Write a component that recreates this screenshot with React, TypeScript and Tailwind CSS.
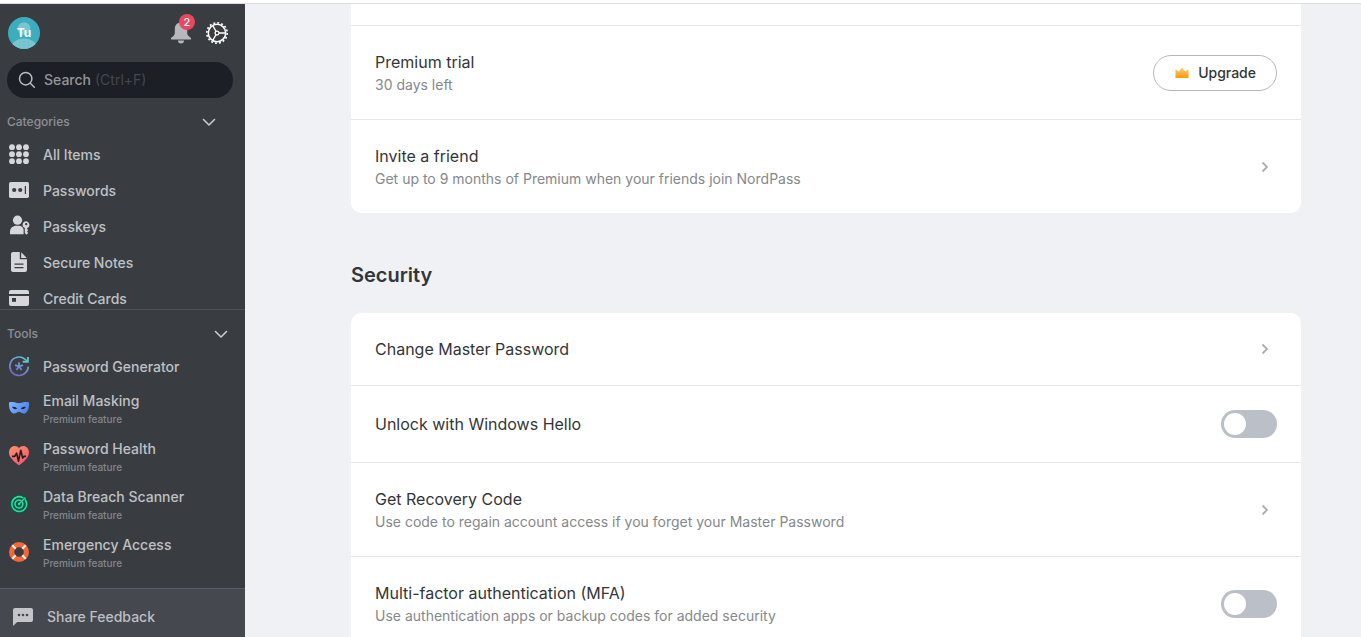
import { useState, type ReactNode } from "react";
import clsx from "clsx";

function ChevronDown() {
  return (
    <svg viewBox="0 0 24 24" className="size-6" fill="none" stroke="#c9cbce" strokeWidth="1.6" strokeLinecap="round" strokeLinejoin="round">
      <path d="M6.500 9.500 12 15l5.500-5.500" />
    </svg>
  );
}

function ChevronRight() {
  return (
    <svg viewBox="0 0 24 24" className="size-6 shrink-0" fill="none" stroke="#acaeb1" strokeWidth="1.8">
      <path d="m9.500 7.500 4.500 4.500-4.500 4.500" />
    </svg>
  );
}

function GridIcon() {
  return (
    <svg viewBox="0 0 24 24" className="size-6" fill="#d5d7da">
      {[4.2, 11.2, 18.2].map((cy) =>
        [5, 12, 19].map((cx) => <circle key={`${cx}-${cy}`} cx={cx} cy={cy} r="2.9" />),
      )}
    </svg>
  );
}

function PasswordIcon() {
  return (
    <svg viewBox="0 0 24 24" className="size-6">
      <rect x="2" y="3" width="20" height="16" rx="1.8" fill="#d5d7da" />
      <circle cx="7.2" cy="11" r="2.1" fill="#393d42" />
      <circle cx="13.2" cy="11" r="2.1" fill="#393d42" />
      <path d="M18.4 7v8" stroke="#393d42" strokeWidth="1.2" />
    </svg>
  );
}

function PasskeyIcon() {
  return (
    <svg viewBox="0 0 24 24" className="size-6" fill="#d5d7da">
      <circle cx="10.5" cy="5.2" r="4.6" />
      <path d="M3 19.2v-2.4c0-3.8 2.8-6 6.5-6h2.2c1.4 0 2.7.4 3.7 1.1.2.8.6 1.5 1.2 2v5.3z" />
      <path
        fillRule="evenodd"
        d="M19.2 6.2a3.6 3.6 0 0 0-1.4 6.900v5l1.600 1.600 1.800-1.800-1.200-1.300 1.200-1.300-1-1.200v-1a3.600 3.600 0 0 0-1-6.900zm0 1.700a1.200 1.200 0 1 1 0 2.400 1.200 1.200 0 0 1 0-2.400z"
      />
    </svg>
  );
}

function NoteIcon() {
  return (
    <svg viewBox="0 0 24 24" className="size-6">
      <path d="M6 1h6.800v7.200H20V19a2 2 0 0 1-2 2H6a2 2 0 0 1-2-2V3a2 2 0 0 1 2-2z" fill="#d5d7da" />
      <path d="M14.200 1.200 19.800 6.900h-5.600z" fill="#d5d7da" />
      <path d="M7.500 13.200h9M7.500 16.600h9" stroke="#393d42" strokeWidth="1.300" />
    </svg>
  );
}

function CardIcon() {
  return (
    <svg viewBox="0 0 24 24" className="size-6">
      <path d="M2 7V5a2 2 0 0 1 2-2h16a2 2 0 0 1 2 2v2zM2 9h20v8a2 2 0 0 1-2 2H4a2 2 0 0 1-2-2z" fill="#d5d7da" />
      <rect x="5" y="11" width="4" height="3.800" fill="#393d42" />
    </svg>
  );
}

function GeneratorIcon() {
  return (
    <svg viewBox="0 0 24 24" className="size-6" fill="none">
      <defs>
        <linearGradient id="generator" x1="18" y1="2" x2="8" y2="21" gradientUnits="userSpaceOnUse">
          <stop stopColor="#5fc0cf" />
          <stop offset="0.5" stopColor="#6d92d8" />
          <stop offset="1" stopColor="#7a64c9" />
        </linearGradient>
      </defs>
      <g stroke="url(#generator)" strokeWidth="1.700">
        <path d="M21.200 11.600A9.200 9.200 0 1 1 17.800 4.100c1 .8 1.700 1.500 2.400 2.400" />
        <path d="M12 11.400V7.200M12 11.400l4-1.300M12 11.400l2.600 3.500M12 11.400l-2.600 3.500M12 11.400 8 10.100" />
      </g>
      <path d="M20.900 2v4.800h-5.200" stroke="#5fc0cf" strokeWidth="1.900" />
    </svg>
  );
}

function MaskIcon() {
  return (
    <svg viewBox="0 0 24 24" className="size-6">
      <defs>
        <linearGradient id="mask" x1="2" y1="6" x2="22" y2="18" gradientUnits="userSpaceOnUse">
          <stop stopColor="#83b3ff" />
          <stop offset="1" stopColor="#477be8" />
        </linearGradient>
      </defs>
      <path
        d="M2 5.500c2-.8 3.800-.6 5.500-.2 1.700.5 2.700.9 4.500.9s2.800-.4 4.500-.9C18.200 4.900 20 4.700 22 5.500c.3 4.200-.5 9.300-4.200 10.900-2.300.9-3.900-1.700-5.800-1.700s-3.500 2.600-5.800 1.700C2.500 14.800 1.700 9.700 2 5.500z"
        fill="url(#mask)"
      />
      <path d="M5.200 10c1.900-.8 4-.1 5 1.700-1.900.9-4.200.4-5-1.700zM18.800 10c-1.900-.8-4-.1-5 1.700 1.900.9 4.200.4 5-1.700z" fill="#20293d" />
    </svg>
  );
}

function HealthIcon() {
  return (
    <svg viewBox="0 0 24 24" className="size-6">
      <defs>
        <linearGradient id="heart" x1="4" y1="2" x2="16" y2="21" gradientUnits="userSpaceOnUse">
          <stop stopColor="#ff8d6b" />
          <stop offset="1" stopColor="#f3566c" />
        </linearGradient>
      </defs>
      <path d="M12 3C14 .5 18 .3 20.200 2.700c2.400 2.600 2.300 6.700.1 9.700-2 2.900-5 5.500-8.300 8-3.300-2.500-6.300-5.100-8.300-8-2.200-3-2.300-7.100.1-9.700C6 .3 10 .5 12 3z" fill="url(#heart)" />
      <path d="M5 11.400h2.800l1.800-3.200 1.900 8 2.300-11 1.900 7.800 1.200-1.600H19" fill="none" stroke="#1f2024" strokeWidth="1.600" strokeLinejoin="round" />
    </svg>
  );
}

function ScannerIcon() {
  return (
    <svg viewBox="0 0 24 24" className="size-6" fill="none">
      <circle cx="12" cy="11" r="9.500" fill="#06594f" />
      <g stroke="#3bd894" strokeWidth="1.500" strokeLinecap="round">
        <path d="M18.400 7A7.400 7.400 0 1 1 15.800 4.600" />
        <path d="M15.600 9.300A4 4 0 1 1 13.800 7.400" />
        <path d="m12 11 6-6" />
      </g>
      <circle cx="12" cy="11" r="1.200" fill="#3bd894" />
    </svg>
  );
}

function EmergencyIcon() {
  return (
    <svg viewBox="0 0 24 24" className="size-6" fill="none">
      <circle cx="12" cy="11" r="7.400" stroke="#f2683a" strokeWidth="5.200" />
      <path d="m5.300 4.300 3.400 3.400M18.700 4.300l-3.400 3.400M5.300 17.700l3.400-3.400M18.700 17.700l-3.400-3.400" stroke="#ffe9df" strokeWidth="2" />
    </svg>
  );
}

function FeedbackIcon() {
  return (
    <svg viewBox="0 0 24 24" className="size-6">
      <path d="M4 3h16a2 2 0 0 1 2 2v10a2 2 0 0 1-2 2H6.200L2 21V5a2 2 0 0 1 2-2z" fill="#c3c5c9" />
      <g fill="#45484f">
        <circle cx="8" cy="10" r="1.300" />
        <circle cx="12" cy="10" r="1.300" />
        <circle cx="16" cy="10" r="1.300" />
      </g>
    </svg>
  );
}

function BellIcon() {
  return (
    <svg viewBox="0 0 24 24" className="size-6" fill="#b6b8bb">
      <path d="M12 1.500c-3.800 0-6.200 2.700-6.200 6.300v4.200c0 1.400-.6 2.300-1.600 3.200L2 17.100v1.400h20v-1.400l-2.200-1.900c-1-.9-1.600-1.800-1.600-3.200V7.800c0-3.600-2.400-6.300-6.200-6.300z" />
      <path d="M9 19.500h6a3 3 0 0 1-6 0z" />
    </svg>
  );
}

function GearIcon() {
  return (
    <svg viewBox="0 0 24 24" className="size-6" fill="none" stroke="#fff">
      <circle cx="12" cy="12" r="8.700" strokeWidth="1.500" />
      <circle cx="12" cy="12" r="10.200" strokeWidth="1.600" strokeDasharray="1.900 2.106" />
      <circle cx="12" cy="12" r="1.900" strokeWidth="1.300" />
      <path d="M14 12h6.400M11 10.300 7.800 4.600M11 13.700l-3.200 5.700" strokeWidth="1.300" />
    </svg>
  );
}

function CrownIcon() {
  return (
    <svg viewBox="0 0 16 16" className="size-4">
      <defs>
        <linearGradient id="crown" x1="8" y1="2" x2="8" y2="14" gradientUnits="userSpaceOnUse">
          <stop stopColor="#ffd080" />
          <stop offset="1" stopColor="#f99500" />
        </linearGradient>
      </defs>
      <path d="m1.500 4.200 3.300 2.200L8 2.400l3.200 4 3.300-2.200V13h-13z" fill="url(#crown)" />
    </svg>
  );
}

const categories = [
  { label: "All Items", icon: <GridIcon /> },
  { label: "Passwords", icon: <PasswordIcon /> },
  { label: "Passkeys", icon: <PasskeyIcon /> },
  { label: "Secure Notes", icon: <NoteIcon /> },
  { label: "Credit Cards", icon: <CardIcon /> },
];

const tools = [
  { label: "Password Generator", icon: <GeneratorIcon />, premium: false },
  { label: "Email Masking", icon: <MaskIcon />, premium: true },
  { label: "Password Health", icon: <HealthIcon />, premium: true },
  { label: "Data Breach Scanner", icon: <ScannerIcon />, premium: true },
  { label: "Emergency Access", icon: <EmergencyIcon />, premium: true },
];

function NavItem({ label, icon, premium = false }: { label: string; icon: ReactNode; premium?: boolean }) {
  return (
    <li>
      <a href="#" className={clsx("flex items-center gap-3 pl-[7px]", premium ? "h-12" : "h-9")}>
        {icon}
        <span className="flex flex-col">
          <span className="text-sm font-medium leading-5 text-[#bfc1c4]">{label}</span>
          {premium && <span className="text-[10px] font-medium leading-4 text-[#84878c]">Premium feature</span>}
        </span>
      </a>
    </li>
  );
}

function Sidebar() {
  return (
    <aside className="flex w-[245px] shrink-0 flex-col bg-[#393d42]">
      {/* Account */}
      <div className="flex h-[58px] shrink-0 items-center justify-between pl-2 pr-4">
        <button type="button" aria-label="Account" className="relative size-8 overflow-hidden rounded-full bg-[#3cadbd]">
          <svg viewBox="0 0 32 32" className="size-8" fill="#78c4d0">
            <circle cx="16" cy="11.500" r="6.300" />
            <ellipse cx="16" cy="30" rx="12.500" ry="8.500" />
          </svg>
          <span className="absolute inset-0 flex items-center justify-center text-xs font-bold text-white">Tu</span>
        </button>
        <div className="flex gap-3">
          <button type="button" aria-label="Notifications" className="relative">
            <BellIcon />
            <span className="absolute -top-[7px] left-2.5 flex size-4 items-center justify-center rounded-full bg-[#e8475f] text-[11px] font-medium text-white">
              2
            </span>
          </button>
          <button type="button" aria-label="Settings">
            <GearIcon />
          </button>
        </div>
      </div>

      {/* Search */}
      <label className="ml-[7px] mr-3 flex h-9 shrink-0 items-center rounded-full bg-[#1c1f26] pl-2 text-sm">
        <svg viewBox="0 0 24 24" className="size-6" fill="none" stroke="#b9bbbf" strokeWidth="1.500" strokeLinecap="round">
          <circle cx="10.700" cy="10.700" r="6.200" />
          <path d="m15.300 15.300 4 4" />
        </svg>
        <input
          type="text"
          aria-label="Search"
          placeholder="Search"
          className="ml-[5px] w-[51px] bg-transparent font-medium text-[#c3c5c8] outline-none placeholder:text-[#94969a]"
        />
        <span className="text-[#44474d]">(Ctrl+F)</span>
      </label>

      {/* Categories */}
      <nav className="min-h-0 flex-1 overflow-hidden">
        <button type="button" className="flex w-full items-center justify-between pb-1.5 pl-[7px] pr-6 pt-[15px]">
          <span className="text-xs font-medium leading-[18px] text-[#8d9095]">Categories</span>
          <span className="-my-1">
            <ChevronDown />
          </span>
        </button>
        <ul>
          {categories.map((item) => (
            <NavItem key={item.label} {...item} />
          ))}
        </ul>
      </nav>

      {/* Tools */}
      <nav className="shrink-0 border-t border-[#4d5157] pb-[11px]">
        <button type="button" className="flex w-full items-center justify-between pb-1.5 pl-[7px] pr-3 pt-[15px]">
          <span className="text-xs font-medium leading-[18px] text-[#8d9095]">Tools</span>
          <span className="-my-1">
            <ChevronDown />
          </span>
        </button>
        <ul>
          {tools.map((item) => (
            <NavItem key={item.label} {...item} />
          ))}
        </ul>
      </nav>

      <a href="#" className="flex h-[49px] shrink-0 items-center gap-3 border-t border-[#595d63] bg-[#45484f] pl-[11px] pt-2">
        <FeedbackIcon />
        <span className="text-sm font-medium leading-5 text-[#bdbfc3]">Share Feedback</span>
      </a>
    </aside>
  );
}

function RowText({ title, description }: { title: string; description?: string }) {
  return (
    <span className="flex flex-col">
      <span className="text-base leading-6 text-[#333639]">{title}</span>
      {description && <span className="text-sm leading-[21px] text-[#85888c]">{description}</span>}
    </span>
  );
}

function LinkRow({ title, description }: { title: string; description?: string }) {
  return (
    <a href="#" className="flex items-center justify-between p-6">
      <RowText title={title} description={description} />
      <ChevronRight />
    </a>
  );
}

function ToggleRow({ title, description }: { title: string; description?: string }) {
  const [enabled, setEnabled] = useState(false);

  return (
    <label className="flex items-center justify-between p-6">
      <RowText title={title} description={description} />
      <input
        type="checkbox"
        role="switch"
        checked={enabled}
        onChange={(e) => setEnabled(e.target.checked)}
        className="flex h-7 w-14 shrink-0 appearance-none items-center rounded-full bg-[#bbbfc7] px-[3px] before:size-[22px] before:rounded-full before:bg-white checked:justify-end checked:bg-[#0e9f8e]"
      />
    </label>
  );
}

export default function App() {
  return (
    <div className="flex h-screen flex-col bg-white font-[Inter,sans-serif]">
      <div className="h-1 shrink-0 border-b border-[#dcdee2]" />
      <div className="flex min-h-0 flex-1">
        <Sidebar />
        <main className="min-w-0 flex-1 overflow-y-auto bg-[#f0f1f5] pl-[106px] pr-[60px] [scrollbar-width:none]">
          {/* Account */}
          <section className="divide-y divide-[#e5e6e9] rounded-b-[10px] bg-white">
            <div className="h-[22px]" />
            <div className="flex items-center justify-between p-6">
              <RowText title="Premium trial" description="30 days left" />
              <button
                type="button"
                className="flex h-9 items-center gap-2 rounded-full border border-[#b5b7ba] px-5 text-sm font-medium text-[#333639]"
              >
                <CrownIcon />
                Upgrade
              </button>
            </div>
            <LinkRow title="Invite a friend" description="Get up to 9 months of Premium when your friends join NordPass" />
          </section>

          {/* Security */}
          <h2 className="mb-6 mt-12 text-xl font-semibold leading-7 text-[#333639]">Security</h2>
          <section className="divide-y divide-[#e5e6e9] rounded-t-[10px] bg-white">
            <LinkRow title="Change Master Password" />
            <ToggleRow title="Unlock with Windows Hello" />
            <LinkRow title="Get Recovery Code" description="Use code to regain account access if you forget your Master Password" />
            <ToggleRow title="Multi-factor authentication (MFA)" description="Use authentication apps or backup codes for added security" />
          </section>
        </main>
      </div>
    </div>
  );
}
